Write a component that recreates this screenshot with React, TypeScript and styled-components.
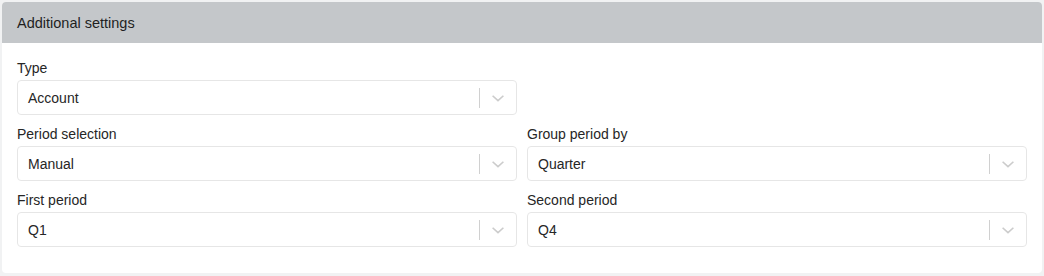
import React from "react";
import styled, { createGlobalStyle } from "styled-components";

const Global = createGlobalStyle`
  html, body { margin: 0; padding: 0; background: #f1f2f3; }
  body { font-family: "Liberation Sans", Arial, sans-serif; color: #222; }
`;

const Page = styled.div`
  padding: 2px 2px 4px 2px;
  width: 1040px;
`;

const Card = styled.section`
  background: #fff;
  border-radius: 4px;
  overflow: hidden;
`;

const Header = styled.div`
  height: 41px;
  background: #c4c7ca;
  display: flex;
  align-items: center;
  padding: 0 15px;
  font-size: 14.5px;
  color: #1f1f1f;
`;

const Body = styled.div`
  padding: 17px 15px 26px 15px;
  display: grid;
  grid-template-columns: 500px 500px;
  column-gap: 10px;
  row-gap: 11px;
`;

const Field = styled.div`
  display: flex;
  flex-direction: column;
  gap: 4px;
`;

const Label = styled.div`
  font-size: 14px;
  line-height: 16px;
  color: #262626;
`;

const Select = styled.div`
  height: 33px;
  border: 1px solid #e6e6e6;
  border-radius: 4px;
  display: flex;
  align-items: center;
  padding-left: 10px;
  font-size: 14px;
  color: #262626;
`;

const Value = styled.div`
  flex: 1;
  padding-top: 1px;
`;

const Sep = styled.div`
  width: 1px;
  height: 20px;
  background: #d0d0d0;
`;

const Chevron = styled.div`
  width: 36px;
  display: flex;
  justify-content: center;
  align-items: center;
`;

const Empty = styled.div``;

const Dropdown = ({ label, value }: { label: string; value: string }) => (
  <Field>
    <Label>{label}</Label>
    <Select>
      <Value>{value}</Value>
      <Sep />
      <Chevron>
        <svg width="18" height="18" viewBox="0 0 20 20">
          <path d="M4 7.5 L10 13 L16 7.5" fill="none" stroke="#cccccc" strokeWidth="1.8" />
        </svg>
      </Chevron>
    </Select>
  </Field>
);

export default function App() {
  return (
    <>
      <Global />
      <Page>
        <Card>
          <Header>Additional settings</Header>
          <Body>
            <Dropdown label="Type" value="Account" />
            <Empty />
            <Dropdown label="Period selection" value="Manual" />
            <Dropdown label="Group period by" value="Quarter" />
            <Dropdown label="First period" value="Q1" />
            <Dropdown label="Second period" value="Q4" />
          </Body>
        </Card>
      </Page>
    </>
  );
}
